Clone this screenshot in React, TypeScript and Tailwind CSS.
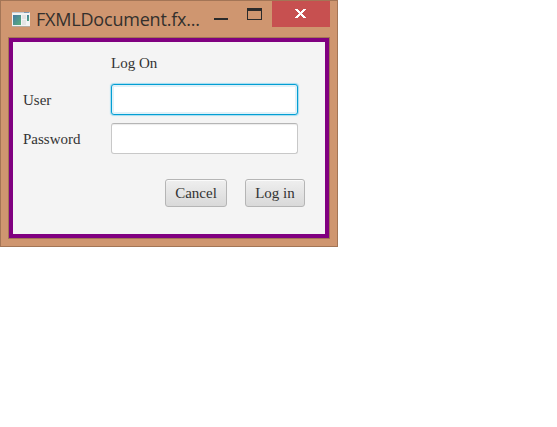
function AppIcon() {
  return (
    <svg width="18" height="15" viewBox="0 0 18 15" className="block shrink-0">
      <defs>
        <linearGradient id="pane" x1="0" y1="0" x2="1" y2="1">
          <stop offset="0" stopColor="#4678a5" />
          <stop offset="1" stopColor="#5ab078" />
        </linearGradient>
      </defs>
      <rect width="18" height="15" fill="#f3f3f4" />
      <rect width="18" height="1" fill="#c3cad2" />
      <rect x="12" width="5" height="1" fill="#7c97b2" />
      <rect y="14" width="18" height="1" fill="#b4aaa2" />
      <rect x="1" y="3" width="8" height="10" fill="url(#pane)" />
      <rect x="10" y="3" width="4" height="4" fill="#e4e4e5" />
      <rect x="10" y="8" width="4" height="5" fill="#e4e4e5" />
      <rect x="15" y="3" width="2" height="6" fill="url(#pane)" />
    </svg>
  );
}

function TitleBar() {
  return (
    <div className="flex h-9 items-start">
      <div className="flex h-9 w-[202px] items-center pl-[11px]">
        <AppIcon />
        <span className="ml-[6px] whitespace-nowrap font-['Open_Sans','Noto_Sans',sans-serif] text-[18px] leading-9 tracking-[-0.2px] text-[#33302d]">
          FXMLDocument.fx...
        </span>
      </div>
      <div className="flex w-[69px] pl-[11px]">
        <div className="mt-[17px] h-[2px] w-[14px] bg-[#2b2b2b]" />
        <div className="ml-[19px] mt-[7px] h-3 w-[15px] border border-t-[3px] border-[#2b2b2b]" />
      </div>
      <button className="flex h-[26px] w-[58px] items-start justify-start bg-[#c75050] pl-[23px] pt-2" aria-label="Close">
        <svg width="11" height="9" viewBox="0 0 11 9" shapeRendering="crispEdges">
          <path
            fill="#fff"
            d="M0 0h3v1h-3zM8 0h3v1h-3zM1 1h3v1h-3zM7 1h3v1h-3zM2 2h3v1h-3zM6 2h3v1h-3zM3 3h5v1h-5zM4 4h3v1h-3zM3 5h5v1h-5zM2 6h3v1h-3zM6 6h3v1h-3zM1 7h3v1h-3zM7 7h3v1h-3zM0 8h3v1h-3zM8 8h3v1h-3z"
          />
        </svg>
      </button>
    </div>
  );
}

const buttonClass =
  "h-7 rounded-[3px] border border-[#b5b5b5] bg-linear-to-b from-[#efefef] to-[#d9d9d9] text-center leading-[26px] shadow-[inset_0_1px_0_#fbfbfb]";

export default function App() {
  return (
    <div className="h-[427px] w-[557px] bg-white">
      <div className="h-[247px] w-[338px] border border-[#a37556] bg-[#cf9670]">
        <TitleBar />
        <div className="ml-[7px] h-[202px] w-[322px] border border-[#a37556]">
          <div className="h-[200px] w-[320px] border-4 border-[#800080] bg-[#f4f4f4] pl-[10px] pt-3 font-['Liberation_Serif',serif] text-[15px] leading-[18px] text-[#333]">
            <div className="pl-[88px]">Log On</div>
            <div className="mt-3 flex h-[31px] items-center">
              <label htmlFor="user" className="w-[88px]">User</label>
              <input
                id="user"
                className="h-[31px] w-[187px] rounded-[3px] border border-[#039ed3] bg-white px-2 shadow-[0_0_1px_1px_#a5dcf0,inset_0_0_0_2px_#e0f1f8] outline-none"
              />
            </div>
            <div className="mt-2 flex h-[31px] items-center">
              <label htmlFor="password" className="w-[88px]">Password</label>
              <input
                id="password"
                type="password"
                className="h-[31px] w-[187px] rounded-[3px] border border-[#c8c8c8] border-t-[#b5b5b5] bg-white px-2 shadow-[inset_0_2px_1px_-1px_#ececec] outline-none"
              />
            </div>
            <div className="mt-[25px] flex gap-[18px] pl-[142px]">
              <button className={`${buttonClass} w-[62px]`}>Cancel</button>
              <button className={`${buttonClass} w-[60px]`}>Log in</button>
            </div>
          </div>
        </div>
      </div>
    </div>
  );
}
